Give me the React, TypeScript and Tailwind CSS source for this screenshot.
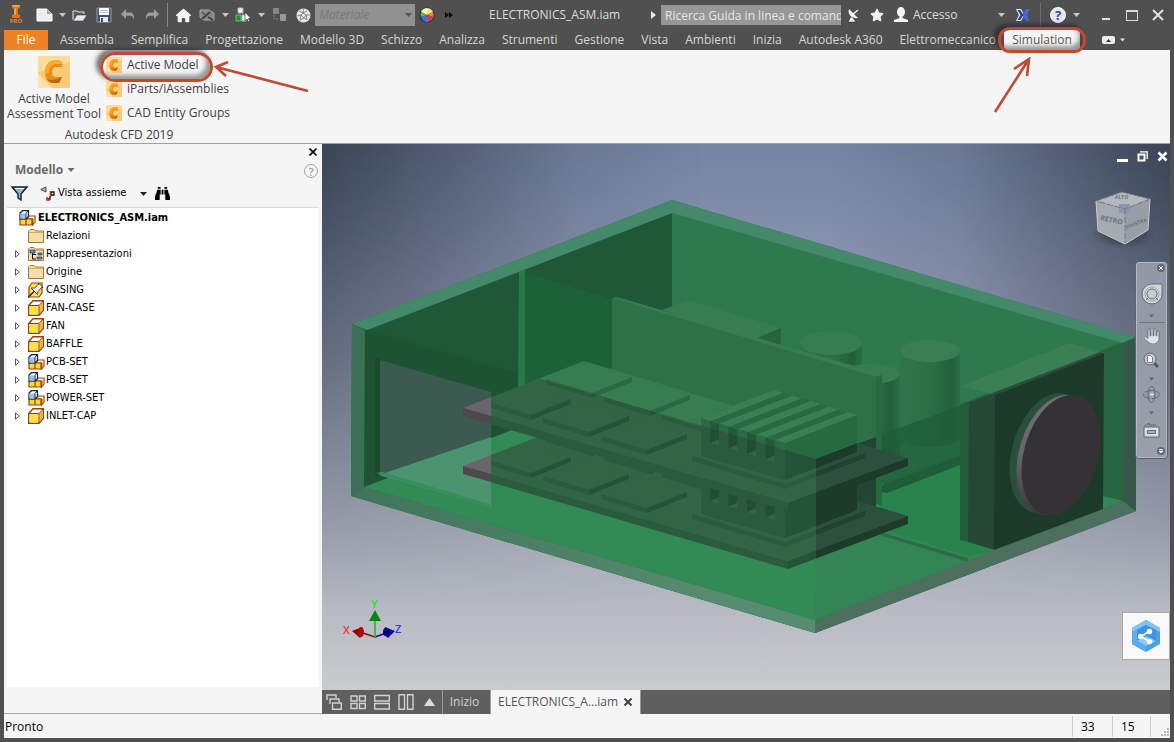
import type { ReactNode } from "react";
import { FaBinoculars } from "react-icons/fa";
import { FaStar, FaHouse, FaHand } from "react-icons/fa6";

const UI = "font-['Open_Sans','Noto_Sans',sans-serif]";

/* ---------- small shared pieces ---------- */

function Caret({ className = "text-[#c8c8c8]" }: { className?: string }) {
  return (
    <svg width="7" height="4" viewBox="0 0 7 4" className={className} aria-hidden="true">
      <path d="M0 0H7L3.5 4Z" fill="currentColor" />
    </svg>
  );
}

function Tool({ label, className = "w-6", children }: { label: string; className?: string; children: ReactNode }) {
  return (
    <button type="button" aria-label={label} className={`flex h-6 shrink-0 items-center justify-center ${className}`}>
      {children}
    </button>
  );
}

function ProLogo() {
  return (
    <div className="flex w-6 shrink-0 flex-col items-center">
      <svg width="10" height="13" viewBox="0 0 10 13" aria-hidden="true">
        <path d="M1 0H9V3L7 4V9L9 10V13H1V10L3 9V4L1 3Z" fill="#d8761c" />
        <path d="M1 0H9L7 2H3ZM3 4 5 3V10L3 9Z" fill="#f7a548" />
      </svg>
      <span className="text-[6px] leading-[7px] font-bold text-[#e08a30]">PRO</span>
    </div>
  );
}

function NewIcon() {
  return (
    <svg width="17" height="14" viewBox="0 0 17 14" aria-hidden="true">
      <path d="M1 1H11L16 6V13H1Z" fill="#eceeef" stroke="#fff" />
      <path d="M11 1V6H16Z" fill="#9aa4ae" />
    </svg>
  );
}

function OpenIcon() {
  return (
    <svg width="16" height="13" viewBox="0 0 16 13" aria-hidden="true">
      <path d="M1 11V2H5L6 3H12V5" fill="#4c5966" stroke="#dfe4e8" />
      <path d="M1 12 5 6H15L11 12Z" fill="#e6eaee" stroke="#39434e" strokeWidth=".6" />
    </svg>
  );
}

function SaveIcon() {
  return (
    <svg width="16" height="16" viewBox="0 0 16 16" aria-hidden="true">
      <path d="M1 1H15V15H1Z" fill="#3e5068" stroke="#8ea0b4" />
      <path d="M3 1H13V8H3Z" fill="#fff" />
      <path d="M4 3.500H12M4 5.500H12" stroke="#b7c0ca" />
      <path d="M4 10H12V15H4Z" fill="#e7ebef" />
      <path d="M5 11H7V15H5Z" fill="#3e5068" />
    </svg>
  );
}

function ArrowIcon({ flip = false }: { flip?: boolean }) {
  return (
    <svg width="14" height="12" viewBox="0 0 14 12" className={flip ? "-scale-x-100" : ""} aria-hidden="true">
      <path d="M0 5 5 0V3.500H9C12 3.500 13.500 6 13 11C12.200 8 11 6.800 9 6.800H5V10Z" fill="#9a9ea2" />
    </svg>
  );
}

function SketchIcon() {
  return (
    <svg width="16" height="14" viewBox="0 0 16 14" aria-hidden="true">
      <path d="M1 2H10L15 5V12H4L1 9Z" fill="#85898c" stroke="#a0a4a7" />
      <path d="M3 11 11 4M9 9 14 12" stroke="#3d4144" strokeWidth="2" />
      <path d="M3 4 6 7" stroke="#5a5e61" strokeWidth="1.500" />
    </svg>
  );
}

function PickIcon() {
  return (
    <svg width="16" height="16" viewBox="0 0 16 16" aria-hidden="true">
      <path d="M3 1H8V6H3Z" fill="#f4f5f6" stroke="#aeb4b8" />
      <path d="M1 8H6V14H1Z" fill="#2b8a35" stroke="#63c56b" />
      <path d="M7 8H11V14H7Z" fill="#e8ebed" stroke="#b3b9bd" />
      <path d="M10 5V14L12 12L13.500 15L14.700 14.300L13.500 11.500H16Z" fill="#fff" stroke="#222" strokeWidth=".6" />
    </svg>
  );
}

function LinkIcon() {
  return (
    <svg width="15" height="14" viewBox="0 0 15 14" aria-hidden="true">
      <rect x="1" y="0" width="6" height="6" rx="1" fill="#85898c" />
      <path d="M2 7V11H6" stroke="#85898c" strokeDasharray="2 1" fill="none" />
      <rect x="8" y="6" width="6" height="7" rx="1" fill="#96999c" />
    </svg>
  );
}

function GlobeIcon() {
  return (
    <svg width="15" height="15" viewBox="0 0 15 15" aria-hidden="true">
      <circle cx="7.500" cy="7.500" r="7" fill="#e6e8ea" />
      <path d="M3 3 7 5 11 3M1 8 5 7 7 5 10 7 14 7M5 7 4 12M10 7 11 12M4 12 8 10 11 12M8 10 5 7M8 10 10 7M7 5 7.500 1" stroke="#6c7278" strokeWidth=".8" fill="none" />
    </svg>
  );
}

function ColorBall() {
  return (
    <svg width="16" height="16" viewBox="0 0 16 16" aria-hidden="true">
      <circle cx="8" cy="8" r="7.500" fill="#1c2440" />
      <path d="M8 8V1A7 7 0 0 1 14 5Z" fill="#f6e27a" />
      <path d="M8 8V1A7 7 0 0 0 2 5Z" fill="#f9f2c8" />
      <path d="M8 8 2 5A7 7 0 0 0 2 10Z" fill="#5fc04a" />
      <path d="M8 8 14 5A7 7 0 0 1 14.500 10Z" fill="#f08a32" />
      <path d="M8 8 2 10A7 7 0 0 0 6 14.700Z" fill="#3a76d8" />
      <path d="M8 8 6 14.700A7 7 0 0 0 11 14.300Z" fill="#8a5bd0" />
      <path d="M8 8 11 14.300A7 7 0 0 0 14.500 10Z" fill="#e23a38" />
    </svg>
  );
}

function DishIcon() {
  return (
    <svg width="13" height="15" viewBox="0 0 13 15" aria-hidden="true">
      <path d="M2 1C0 6 5 11 11 10Z" fill="#f4f4f4" />
      <path d="M6 6 11 2" stroke="#f4f4f4" strokeWidth="1.500" />
      <path d="M4 9 1 14H9L6 10" fill="#f4f4f4" stroke="#222" strokeWidth=".5" />
    </svg>
  );
}

function PersonIcon() {
  return (
    <svg width="16" height="16" viewBox="0 0 16 16" aria-hidden="true">
      <ellipse cx="8" cy="5" rx="4" ry="5" fill="#f4f4f4" />
      <path d="M6.500 9H9.500V11L15 13V15H1V13L6.500 11Z" fill="#f4f4f4" />
    </svg>
  );
}

function ExchangeIcon() {
  return (
    <svg width="14" height="12" viewBox="0 0 14 12" aria-hidden="true">
      <path d="M0 0H5L8.500 6L5 12H0L3 6Z" fill="#e9eefc" />
      <path d="M14 0H10L6 6L10 12H14L11 6Z" fill="#4469d0" />
      <path d="M1.500 1H4.300L7.500 6 4.300 11H1.500L4.500 6Z" fill="#23408f" />
    </svg>
  );
}

/* ---------- top bars ---------- */

function TitleBar() {
  return (
    <header className="flex h-[30px] items-center px-1 text-[#dcdcdc]">
      <ProLogo />
      <Tool label="Nuovo" className="ml-1 w-6"><NewIcon /></Tool>
      <Tool label="Opzioni nuovo" className="w-3"><Caret /></Tool>
      <Tool label="Apri"><OpenIcon /></Tool>
      <Tool label="Salva"><SaveIcon /></Tool>
      <Tool label="Annulla"><ArrowIcon /></Tool>
      <Tool label="Ripeti"><ArrowIcon flip /></Tool>
      <span className="mx-[3px] h-6 w-px shrink-0 bg-[#8a8a8a]" />
      <Tool label="Home"><FaHouse size={15} color="#f2f2f2" /></Tool>
      <Tool label="Schizzo"><SketchIcon /></Tool>
      <Tool label="Opzioni schizzo" className="w-3"><Caret /></Tool>
      <Tool label="Seleziona"><PickIcon /></Tool>
      <Tool label="Opzioni selezione" className="w-3"><Caret /></Tool>
      <Tool label="Collega"><LinkIcon /></Tool>
      <Tool label="Aspetto"><GlobeIcon /></Tool>
      <div className="relative flex shrink-0 items-center">
        <select aria-label="Materiale" className="h-[22px] w-[100px] appearance-none bg-[#919191] pl-1 text-[12px] text-[#787878] italic">
          <option>Materiale</option>
        </select>
        <span className="pointer-events-none absolute right-[3px]"><Caret className="text-[#555]" /></span>
      </div>
      <Tool label="Colore"><ColorBall /></Tool>
      <Tool label="Altro" className="w-5">
        <svg width="8" height="6" viewBox="0 0 8 6" aria-hidden="true"><path d="M0 0 4 3 0 6ZM4 0 8 3 4 6Z" fill="#0c0c0c" /></svg>
      </Tool>
      <h1 className="ml-[30px] flex-1 text-[12px] whitespace-nowrap">ELECTRONICS_ASM.iam</h1>
      <Tool label="Espandi ricerca" className="w-4">
        <svg width="5" height="8" viewBox="0 0 5 8" aria-hidden="true"><path d="M0 0 5 4 0 8Z" fill="#e8e8e8" /></svg>
      </Tool>
      <input
        aria-label="Ricerca"
        defaultValue="Ricerca Guida in linea e comand"
        className="h-5 w-[180px] shrink-0 bg-[#979797] pl-1 text-[12px] text-[#e6e6e6]"
      />
      <Tool label="Comunicazioni"><DishIcon /></Tool>
      <Tool label="Preferiti"><FaStar size={14} color="#f0f0f0" /></Tool>
      <button type="button" className="flex h-6 w-[106px] shrink-0 items-center gap-1 pl-1 text-[12px]">
        <PersonIcon />
        Accesso
      </button>
      <Tool label="Opzioni accesso" className="w-3"><Caret /></Tool>
      <Tool label="Exchange" className="ml-1 w-6"><ExchangeIcon /></Tool>
      <span className="mx-[5px] h-6 w-px shrink-0 bg-[#707070]" />
      <Tool label="Guida">
        <span className="flex size-4 items-center justify-center rounded-full border border-white bg-[#e4e8f4] text-[13px] leading-none font-bold text-[#1d4aa8]">?</span>
      </Tool>
      <Tool label="Opzioni guida" className="w-3"><Caret /></Tool>
      <Tool label="Riduci a icona" className="ml-3 w-6"><span className="mt-2 h-[2px] w-2 bg-[#e0e0e0]" /></Tool>
      <Tool label="Ingrandisci" className="w-7"><span className="h-[11px] w-3 border border-t-2 border-[#d8d8d8]" /></Tool>
      <Tool label="Chiudi">
        <svg width="12" height="12" viewBox="0 0 12 12" aria-hidden="true"><path d="M1 1 11 11M11 1 1 11" stroke="#e0e0e0" strokeWidth="2" /></svg>
      </Tool>
    </header>
  );
}

const TABS = [
  "Assembla", "Semplifica", "Progettazione", "Modello 3D", "Schizzo", "Analizza", "Strumenti", "Gestione",
  "Vista", "Ambienti", "Inizia", "Autodesk A360", "Elettromeccanico",
];

function Ring({ className }: { className: string }) {
  return (
    <span
      className={`pointer-events-none absolute z-10 border-[3px] border-[#bf4a32] shadow-[-4px_-3px_4px_rgba(30,30,30,0.6),inset_-4px_-4px_4px_rgba(60,60,60,0.5)] ${className}`}
    />
  );
}

function TabBar() {
  return (
    <nav className="flex h-5 px-1 text-[12px] leading-5 text-[#d6d6d6]">
      <button type="button" className="w-11 shrink-0 bg-[#f08226] text-white">File</button>
      <div className="ml-1 flex shrink-0 gap-px">
        {TABS.map((t) => (
          <button type="button" key={t} className="px-2 whitespace-nowrap">{t}</button>
        ))}
      </div>
      <div className="relative">
        <button type="button" className="h-5 w-[76px] bg-[#f5f5f5] text-[#555]">Simulation</button>
        <Ring className="-inset-x-[6px] -top-[3px] -bottom-[3px] rounded-xl" />
        <svg width="38" height="58" viewBox="0 0 38 58" className="pointer-events-none absolute -left-[11px] top-[27px] z-10" aria-hidden="true">
          <path d="M2 55 36 2M21 12 36 2 34 19" fill="none" stroke="#c04a32" strokeWidth="2.600" />
        </svg>
      </div>
      <button type="button" aria-label="Riduci barra multifunzione" className="ml-[22px] flex items-center gap-[5px]">
        <span className="flex h-2 w-[13px] items-center justify-center rounded-[2px] bg-[#ececec]">
          <svg width="5" height="3" viewBox="0 0 5 3" aria-hidden="true"><path d="M0 3H5L2.500 0Z" fill="#333" /></svg>
        </span>
        <Caret className="w-[5px] text-[#e0e0e0]" />
      </button>
    </nav>
  );
}

function CfdIcon({ size }: { size: number }) {
  return (
    <svg width={size} height={size} viewBox="0 0 32 32" className="shrink-0" aria-hidden="true">
      <rect width="32" height="32" fill="#fbdc9c" />
      <path d="M0 16 32 6V32H0Z" fill="#fccb78" />
      <path d="M0 18 14 32H0Z" fill="#fde3b4" />
      <path d="M24 5V11H19C15 11 14 13 14 16C14 20 16 21 19 21H24L21 27H16C10 27 7 23 7 17C7 9 11 4 18 4Z" fill="#e98d13" />
      <path d="M24 5V8H18C13 8 11 12 11 17L7 18C7 9 11 4 18 4Z" fill="#f6ab32" />
      <path d="M24 21 21 27H16C12 27 10 25 9 23C13 25 18 24 24 21Z" fill="#b9660c" />
    </svg>
  );
}

function Ribbon() {
  return (
    <section className="mx-1 flex h-[94px] border-b border-[#a0a0a0] bg-[#f5f5f5] text-[12px] text-[#3f3f3f]">
      <div className="flex flex-col">
        <div className="flex h-[76px]">
          <button type="button" className="flex w-[100px] flex-col items-center pt-[6px] leading-[15px]">
            <CfdIcon size={32} />
            <span className="mt-[3px] whitespace-nowrap">Active Model<br />Assessment Tool</span>
          </button>
          <div className="flex flex-col items-start pt-[3px] pl-[2px]">
            <div className="relative">
              <button type="button" className="flex h-6 items-center gap-[5px]">
                <CfdIcon size={16} />Active Model
              </button>
              <Ring className="-top-[1px] -left-[6px] h-[30px] w-[113px] rounded-2xl" />
              <svg width="96" height="32" viewBox="0 0 96 32" className="pointer-events-none absolute top-[7px] left-[107px] z-10" aria-hidden="true">
                <path d="M95 31 3 7M15 2 3 7 13 16" fill="none" stroke="#c04a32" strokeWidth="2.600" />
              </svg>
            </div>
            <button type="button" className="flex h-6 items-center gap-[5px]"><CfdIcon size={16} />iParts/iAssemblies</button>
            <button type="button" className="flex h-6 items-center gap-[5px]"><CfdIcon size={16} />CAD Entity Groups</button>
          </div>
        </div>
        <div className="pl-1 text-center leading-[17px]">Autodesk CFD 2019</div>
      </div>
    </section>
  );
}

/* ---------- model browser ---------- */

function PartIcon() {
  return (
    <svg width="16" height="16" viewBox="0 0 16 16" className="shrink-0" aria-hidden="true">
      <path d="M.7 5.500 5 .7H15.300V10.500L11 15.300H.7Z" fill="#fff" stroke="#94400c" strokeWidth="1.400" />
      <path d="M1.400 6H10.500V14.600H1.400Z" fill="#fde24a" />
      <path d="M11.500 5.500 14.600 2V10L11.500 13.800Z" fill="#f2b824" />
      <path d="M1 5.500H11L15 1M11 5.500V15" stroke="#94400c" fill="none" />
    </svg>
  );
}

function AssemblyIcon() {
  return (
    <svg width="17" height="16" viewBox="0 0 17 16" className="shrink-0" aria-hidden="true">
      <path d="M7.500 9 10 6H16V12L13.500 15V9Z" fill="#fff" stroke="#94400c" strokeWidth="1.200" />
      <path d="M13.800 9.500 15.500 7.500V12L13.800 14Z" fill="#eaa71e" />
      <path d="M1 9H7V15H1ZM7 9H13V15H7Z" fill="#fcd83c" stroke="#94400c" strokeWidth="1.200" />
      <path d="M1 3 3.500 .7H9.500V6.500L7 9H1Z" fill="#f4f8fd" stroke="#172437" strokeWidth="1.200" />
      <path d="M1.500 3.500H6.500V8.500H1.500Z" fill="#9fc0e6" />
      <path d="M7 3.500V9M7 3.500 9 1" stroke="#172437" />
    </svg>
  );
}

function FolderIcon({ views = false }: { views?: boolean }) {
  return (
    <svg width="16" height="16" viewBox="0 0 16 16" className="shrink-0" aria-hidden="true">
      <path d="M.5 14.500V3L2 1.500H6L7.500 3H15.500V14.500Z" fill="#f4dcab" stroke="#a8762c" />
      <path d="M1 4.500H15" stroke="#d6ab64" />
      {views && (
        <g>
          <path d="M4.500 5V13H8M4.500 8.500H8" stroke="#111" fill="none" />
          <path d="M2 4H7V7H2ZM10 7H14V9H10ZM9 11H14V13H9Z" fill="#4b8fd0" stroke="#1d3a5c" strokeWidth=".7" />
        </g>
      )}
    </svg>
  );
}

function PinnedIcon() {
  return (
    <svg width="16" height="16" viewBox="0 0 16 16" className="shrink-0" aria-hidden="true">
      <path d="M1 5 4 1H14V11L11 15H1Z" fill="#fde24a" stroke="#94400c" strokeWidth="1.200" />
      <path d="M0 15.500 6 9.500" stroke="#222" strokeWidth="1.300" />
      <path d="M3 6 9.500 12.500 10 9.500 13.500 5.500 15 5.500 10.500 1V2.500L6.500 6Z" fill="#f4f4f4" stroke="#222" strokeWidth=".8" />
    </svg>
  );
}

type Node = { name: string; icon: ReactNode; leaf?: boolean };
const NODES: Node[] = [
  { name: "Relazioni", icon: <FolderIcon />, leaf: true },
  { name: "Rappresentazioni", icon: <FolderIcon views /> },
  { name: "Origine", icon: <FolderIcon /> },
  { name: "CASING", icon: <PinnedIcon /> },
  { name: "FAN-CASE", icon: <PartIcon /> },
  { name: "FAN", icon: <PartIcon /> },
  { name: "BAFFLE", icon: <PartIcon /> },
  { name: "PCB-SET", icon: <AssemblyIcon /> },
  { name: "PCB-SET", icon: <AssemblyIcon /> },
  { name: "POWER-SET", icon: <AssemblyIcon /> },
  { name: "INLET-CAP", icon: <PartIcon /> },
];

function Browser() {
  return (
    <aside className="flex w-[318px] shrink-0 flex-col border-b border-[#a8a8a8] bg-[#f5f5f5] px-[3px]">
      <div className="flex justify-end pt-1 pr-[2px]">
        <button type="button" aria-label="Chiudi browser">
          <svg width="8" height="8" viewBox="0 0 8 8" aria-hidden="true"><path d="M.5 .5 7.500 7.500M7.500 .5 .5 7.500" stroke="#000" strokeWidth="1.600" /></svg>
        </button>
      </div>
      <div className="flex h-[22px] items-end justify-between pr-px pl-2">
        <button type="button" className="flex items-center gap-1 text-[12px] leading-4 font-bold text-[#6a6a6a]">
          Modello <Caret className="w-2 text-[#6a6a6a]" />
        </button>
        <button type="button" aria-label="Guida" className="flex size-[14px] items-center justify-center rounded-full border border-[#a0a0a0] text-[11px] leading-none text-[#8a8a8a]">?</button>
      </div>
      <div className="flex h-[30px] items-center border-b border-[#d8d8d8] pt-[2px] pl-1 font-['DejaVu_Sans_Condensed','Noto_Sans',sans-serif] text-[11px] text-black">
        <button type="button" aria-label="Filtro">
          <svg width="17" height="15" viewBox="0 0 17 15" aria-hidden="true">
            <path d="M1 1H16L10 8V14L7 12V8Z" fill="#8fb4d4" stroke="#14202c" strokeWidth="1.400" />
            <path d="M4 2.500H13" stroke="#fff" />
          </svg>
        </button>
        <button type="button" className="ml-3 flex items-center gap-[2px]">
          <svg width="16" height="15" viewBox="0 0 16 15" aria-hidden="true">
            <path d="M.8 3.500 6 1V6Z" fill="#bbb" stroke="#222" strokeWidth=".8" />
            <path d="M7 13H10V10M11 10V6H14V9H11" stroke="#111" fill="none" strokeWidth="1.300" />
            <path d="M7 11V14H10M10.500 5V11" stroke="#d4242a" strokeWidth="1.500" fill="none" />
          </svg>
          Vista assieme
          <Caret className="ml-3 text-[#222]" />
        </button>
        <button type="button" aria-label="Trova" className="ml-2"><FaBinoculars size={15} /></button>
      </div>
      <ul className="mb-[26px] flex-1 bg-white pt-px font-['DejaVu_Sans_Condensed','Noto_Sans',sans-serif] text-[11px] leading-[18px] text-black">
        <li className="flex h-[18px] items-center gap-[2px] pl-3 font-bold"><AssemblyIcon />ELECTRONICS_ASM.iam</li>
        {NODES.map((n, i) => (
          <li key={i} className="flex h-[18px] items-center">
            <button type="button" aria-label={`Espandi ${n.name}`} className={`ml-2 flex w-[13px] ${n.leaf ? "invisible" : ""}`}>
              <svg width="5" height="8" viewBox="0 0 5 8" aria-hidden="true"><path d="M.5 .8 4.300 4 .5 7.200Z" fill="#fff" stroke="#444" strokeWidth=".9" /></svg>
            </button>
            <span className="flex w-[18px]">{n.icon}</span>
            {n.name}
          </li>
        ))}
      </ul>
    </aside>
  );
}

/* ---------- 3D scene ---------- */

type Palette = { top: string; left: string; right: string; fin: string; slot: string };
const LIT: Palette = { top: "#387c51", left: "#2c6b45", right: "#276a42", fin: "#3a7f54", slot: "#235b3a" };
const SHADE: Palette = { top: "#336446", left: "#2b5b3e", right: "#245438", fin: "#326446", slot: "#234c35" };
const DARK: Palette = { top: "#2d4f3d", left: "#1f4330", right: "#1c3b2a", fin: "#2d4f3d", slot: "#1c3b2a" };

const CHIPS = [
  [592, 393], [650, 411], [531, 415], [589, 432], [647, 450],
];

function Board({ p }: { p: Palette }) {
  return (
    <g>
      <path d="M463 408 584 361 908 458 788 503Z" fill={p.top} />
      <path d="M463 408 788 503V511L463 416Z" fill={p.left} />
      <path d="M788 503 908 458V466L788 511Z" fill={p.right} />
      {CHIPS.map(([x, y]) => (
        <g key={`${x}-${y}`} transform={`translate(${x} ${y})`}>
          <path d="M-46 -14 -7 -30 40 -16 0 0Z" fill={p.top} />
          <path d="M-46 -14 0 0V5L-46 -9Z" fill={p.left} />
          <path d="M0 0 40 -16V-11L0 5Z" fill={p.right} />
        </g>
      ))}
      <path d="M661 415 710 430V434L661 419Z" fill={p.left} />
      <path d="M692 456 785 484 865 453V458L785 489 692 461Z" fill={p.left} />
      <path d="M701 418 785 442V480L701 456Z" fill={p.left} />
      <path d="M785 442 857 415V452L785 480Z" fill={p.right} />
      <path d="M701 418 774 390 857 415 785 442Z" fill={p.right} />
      {[0, 1, 2, 3, 4].map((k) => (
        <path key={k} d="M701 418 774 390 783 393 711 421Z" fill={p.fin} transform={`translate(${k * 18.500} ${k * 5.500})`} />
      ))}
      {[0, 1, 2, 3].map((k) => (
        <g key={k} transform={`translate(${k * 18.500} ${k * 5.500})`}>
          <path d="M710 421 719 424V446L710 443Z" fill={p.slot} />
          <path d="M710 443 719 439V446Z" fill={p.top} />
        </g>
      ))}
    </g>
  );
}

function Scene() {
  return (
    <svg viewBox="322 144 848 546" preserveAspectRatio="xMidYMid slice" className="absolute inset-0 size-full" aria-hidden="true">
      <defs>
        <linearGradient id="sky" x1="0" y1="0" x2="0" y2="1">
          <stop offset="0" stopColor="#7484a3" />
          <stop offset=".25" stopColor="#8c96b1" />
          <stop offset=".7" stopColor="#a6abb9" />
          <stop offset=".85" stopColor="#b7bac3" />
          <stop offset="1" stopColor="#cacbce" />
        </linearGradient>
        <linearGradient id="sides" x1="0" x2="1">
          <stop offset="0" stopColor="#2c3442" stopOpacity=".8" />
          <stop offset=".12" stopColor="#2c3442" stopOpacity=".55" />
          <stop offset=".3" stopColor="#2c3442" stopOpacity=".15" />
          <stop offset=".45" stopColor="#2c3442" stopOpacity="0" />
          <stop offset=".6" stopColor="#2c3442" stopOpacity="0" />
          <stop offset=".75" stopColor="#2c3442" stopOpacity=".15" />
          <stop offset=".9" stopColor="#2c3442" stopOpacity=".55" />
          <stop offset="1" stopColor="#2c3442" stopOpacity=".8" />
        </linearGradient>
        <linearGradient id="fade" x1="0" y1="0" x2="0" y2="1">
          <stop offset="0" stopColor="#fff" />
          <stop offset=".4" stopColor="#8c8c8c" />
          <stop offset=".65" stopColor="#383838" />
          <stop offset=".85" stopColor="#000" />
        </linearGradient>
        <mask id="topMask"><rect x="322" y="144" width="848" height="546" fill="url(#fade)" /></mask>
        <linearGradient id="cyl" x1="0" x2="1">
          <stop offset="0" stopColor="#31744b" />
          <stop offset=".6" stopColor="#2a6c45" />
          <stop offset=".85" stopColor="#225e3a" />
          <stop offset="1" stopColor="#2b6f47" />
        </linearGradient>
        <linearGradient id="rim" x1="0" y1="0" x2="0" y2="1">
          <stop offset="0" stopColor="#707074" />
          <stop offset=".5" stopColor="#666669" />
          <stop offset="1" stopColor="#3a383c" />
        </linearGradient>
        <linearGradient id="base" x1="0" x2="1">
          <stop offset="0" stopColor="#3f7459" />
          <stop offset=".8" stopColor="#588c70" />
        </linearGradient>
        <clipPath id="above"><path d="M322 144H1170V324L816 459 352 324H322Z" /></clipPath>
        <clipPath id="frontLeft"><path d="M352 324 816 459V690H322Z" /></clipPath>
        <clipPath id="frontRight"><path d="M816 459 1170 324V690H816Z" /></clipPath>
      </defs>
      <rect x="322" y="144" width="848" height="546" fill="url(#sky)" />
      <rect x="322" y="144" width="848" height="546" fill="url(#sides)" mask="url(#topMask)" />

      {/* enclosure walls */}
      <path d="M352 324 672 200 1136 337V511L815 633 351 496Z" fill="#2f794e" />
      <path d="M365 331 672 213V500L364 487Z" fill="#1e5836" />
      <path d="M352 324 816 459 1136 337V511L815 633 351 496Z" fill="#1d5534" opacity=".5" />
      <path d="M365 331 525 375V470L364 487Z" fill="#1d5233" />
      <path d="M352 324 672 200 1136 337 1122 343 672 213 367 330Z" fill="#43896a" />
      <path d="M525 273 612 299V430H525Z" fill="#1c6138" />
      <path d="M519 272 525 270V400H518Z" fill="#287a4b" />

      {/* floor */}
      <path d="M364 487 512 430 700 485 960 430 1123 501 815 620Z" fill="#328a55" />
      <path d="M880 480 960 455 994 500V550L968 558 880 532Z" fill="#28834c" />
      <path d="M816 540 882 528 968 556 1000 549 815 620Z" fill="#338553" />
      <path d="M880 532 968 558V562L880 535Z" fill="#2c6b47" />

      {/* power set */}
      <path d="M662 310 688 300 781 328 755 339Z" fill="#387c51" />
      <path d="M755 339 781 328V347Z" fill="#27633f" />
      <path d="M800 345V370H862V345Z" fill="url(#cyl)" />
      <ellipse cx="831" cy="343" rx="31" ry="12" fill="#387c51" />
      <path d="M840 374V470H900V374Z" fill="url(#cyl)" />
      <ellipse cx="870" cy="374" rx="30" ry="10" fill="#387c51" />
      <path d="M900 352V438A30 9 0 0 0 960 438V352Z" fill="url(#cyl)" />
      <ellipse cx="930" cy="351" rx="30" ry="11" fill="#3a7e53" />
      <path d="M882 434 960 406V456L887 485 882 483Z" fill="#1f5c39" opacity=".75" />
      <path d="M882 485 960 456V465L887 493 882 492Z" fill="#1f5c38" />
      <path d="M612 298 882 376V502L612 430Z" fill="#2e7149" />
      <path d="M612 298 617 297 882 374 877 377Z" fill="#387c51" />
      <path d="M876 377 882 375V506L876 504Z" fill="#256b42" />
      <path d="M816 459 876 437V506L816 520Z" fill="#234533" />

      {/* circuit boards */}
      <g clipPath="url(#frontLeft)"><g transform="translate(0 58)"><Board p={SHADE} /></g></g>
      <g clipPath="url(#frontRight)"><g transform="translate(0 58)"><Board p={DARK} /></g></g>
      <g clipPath="url(#above)"><Board p={LIT} /></g>
      <g clipPath="url(#frontLeft)"><Board p={SHADE} /></g>
      <g clipPath="url(#frontRight)"><Board p={DARK} /></g>

      {/* inlet window */}
      <path d="M380 360 491 392V508L379 475Z" fill="#3b5b50" />
      <path d="M379 475 491 437V508Z" fill="#4c9470" />
      <path d="M463 408 491 397V417L463 408Z" fill="#68666b" />
      <path d="M463 408 491 416V424L463 416Z" fill="#4b494e" />
      <path d="M463 466 491 455V475Z" fill="#68666b" />
      <path d="M463 466 491 474V482L463 474Z" fill="#4b494e" />
      <path d="M375 357 380 359V474L375 475Z" fill="#194a2d" />
      <path d="M376 473 382 472 490 504V508Z" fill="#34905c" />

      {/* enclosure edges */}
      <path d="M352 324 365 331 364 487 351 496Z" fill="#3b7056" />
      <path d="M351 496 364 487 815 620V633Z" fill="url(#base)" />
      <path d="M815 633V620L1123 501 1136 511Z" fill="#4c6f5e" />
      <path d="M1104 352 1124 345V501L1103 509Z" fill="#276541" />
      <path d="M1103 496 1123 501 1103 509Z" fill="#35875a" />
      <path d="M1123 344 1136 337V511L1123 501Z" fill="#36584a" />

      {/* fan */}
      <path d="M961 386 1070 343 1104 353 995 395Z" fill="#3b7f54" />
      <path d="M961 405 995 392 1100 352 1104 353 995 397Z" fill="#2c4f3c" />
      <path d="M960 406 969 403V542L960 540Z" fill="#205d38" />
      <path d="M969 403 995 394V550L968 542Z" fill="#274735" />
      <path d="M995 395 1104 353 1103 509 994 550Z" fill="#1c3a2a" />
      <circle r="1" transform="matrix(38 0 -10.500 60 1049 453)" fill="#2a4f3c" />
      <circle r="1" transform="matrix(38 0 -10.500 60 1056 455)" fill="url(#rim)" />
      <circle r="1" transform="matrix(38 0 -10.500 60 1061 455)" fill="#343236" />
    </svg>
  );
}

function Triad() {
  return (
    <svg width="64" height="46" viewBox="0 0 64 46" className="absolute bottom-[48px] left-5" aria-hidden="true">
      <path d="M33 41 18 36" stroke="#8c0d0d" strokeWidth="1.500" />
      <path d="M33 41 44 37" stroke="#10108c" strokeWidth="1.500" />
      <path d="M33 41V18" stroke="#0bbf1d" strokeWidth="1.500" />
      <path d="M33 14 39 25H27Z" fill="#0a870a" />
      <path d="M10 35 20 31 21 38 18 42Z" fill="#8b0808" />
      <ellipse cx="19" cy="36" rx="3" ry="5" fill="#b00b0b" />
      <path d="M53 35 43 31 41 38 46 42Z" fill="#0808a0" />
      <ellipse cx="44" cy="36" rx="3" ry="4" fill="#05056c" />
      <text x="29" y="12" fontSize="11" fontWeight="600" fontFamily="Open Sans" fill="#1ce81c">Y</text>
      <text x="1" y="38" fontSize="11" fontWeight="600" fontFamily="Open Sans" fill="#f03434">X</text>
      <text x="53" y="37" fontSize="11" fontWeight="600" fontFamily="Open Sans" fill="#3434e8">Z</text>
    </svg>
  );
}

function ViewCube() {
  return (
    <svg width="66" height="66" viewBox="0 0 66 66" className="absolute top-[42px] right-[14px]" aria-hidden="true">
      <defs>
        <radialGradient id="cubeShadow"><stop offset="0" stopColor="#222" stopOpacity=".7" /><stop offset="1" stopColor="#222" stopOpacity="0" /></radialGradient>
      </defs>
      <ellipse cx="33" cy="48" rx="32" ry="15" fill="url(#cubeShadow)" />
      <path d="M6 15 32 6 60 13 35 23Z" fill="#b5b8be" />
      <path d="M6 15 35 23V58L8 45Z" fill="#a6aab1" />
      <path d="M35 23 60 13 58 44 35 58Z" fill="#999da6" />
      <path d="M29 18H40V27H29Z" fill="#8b97aa" />
      <path d="M6 15 32 6 60 13 35 23ZM35 23V58" fill="none" stroke="#74787f" strokeDasharray="6 2" />
      <path d="M6 15 8 45 35 58 58 44 60 13" fill="none" stroke="#c7c9cd" />
      <g fontWeight="700" fontFamily="Open Sans" fill="#6e7279">
        <text x="10" y="34" fontSize="7" transform="rotate(12 10 34)">RETRO</text>
        <text x="36" y="43" fontSize="5" transform="rotate(-20 36 43)">SINISTRA</text>
        <text x="25" y="13" fontSize="5">ALTO</text>
      </g>
    </svg>
  );
}

function NavBar() {
  return (
    <div className="absolute top-[117px] right-[2px] flex h-[198px] w-[33px] flex-col items-center rounded-[4px] border border-[#5c6474] bg-[#9ea2ae]/85 text-[#5f6571] shadow-[inset_0_0_0_1px_#b4b8c0]">
      <button type="button" aria-label="Chiudi barra" className="mt-[2px] mr-[2px] flex size-[8px] items-center justify-center self-end rounded-full bg-[#626874]">
        <svg width="4" height="4" viewBox="0 0 4 4" aria-hidden="true"><path d="M0 0 4 4M4 0 0 4" stroke="#fff" /></svg>
      </button>
      <button type="button" aria-label="Ruota di navigazione" className="mt-[11px]">
        <svg width="22" height="22" viewBox="0 0 22 22" aria-hidden="true">
          <path d="M21 1H11A10 10 0 1 0 21 11Z" fill="#d3d5d9" stroke="#666c77" />
          <circle cx="11" cy="11" r="7" fill="none" stroke="#8a909a" strokeWidth=".7" />
          <circle cx="11" cy="11" r="5" fill="#c9ccd1" stroke="#666c77" />
          <path d="M5 17 8 14M17 17 14 14" stroke="#666c77" />
        </svg>
      </button>
      <Caret className="mt-[9px] w-[5px]" />
      <span className="mt-1 h-px w-[26px] bg-[#6f7582]" />
      <button type="button" aria-label="Pan" className="mt-[5px]"><FaHand size={16} color="#e2e3e6" stroke="#5f6571" strokeWidth={25} /></button>
      <button type="button" aria-label="Zoom" className="mt-2">
        <svg width="17" height="17" viewBox="0 0 17 17" aria-hidden="true">
          <path d="M11 11 15 15" stroke="#555b66" strokeWidth="3" />
          <circle cx="7" cy="7" r="6" fill="#c4c7cd" stroke="#5f6571" />
          <path d="M4.500 3.500H7.500L9.500 5.500V10.500H4.500Z" fill="#f4f4f6" stroke="#5f6571" strokeWidth=".8" />
        </svg>
      </button>
      <Caret className="mt-2 w-[5px]" />
      <button type="button" aria-label="Orbita" className="mt-[5px]">
        <svg width="17" height="17" viewBox="0 0 17 17" aria-hidden="true">
          <ellipse cx="8.500" cy="8.500" rx="8" ry="4" fill="none" stroke="#626874" strokeDasharray="9 2" />
          <ellipse cx="8.500" cy="8.500" rx="3.500" ry="8" fill="none" stroke="#626874" />
          <path d="M7 8.500H11M9 6.500V10.500" stroke="#e2e3e6" />
        </svg>
      </button>
      <Caret className="mt-2 w-[5px]" />
      <button type="button" aria-label="Guarda" className="mt-[7px]">
        <svg width="17" height="16" viewBox="0 0 17 16" aria-hidden="true">
          <path d="M1 5H16V15H1Z" fill="#dcdde0" stroke="#5f6571" />
          <path d="M4.500 8.500H12.500V11.500H4.500Z" fill="#aeb2ba" stroke="#5f6571" />
          <path d="M2 4 6 1V3H13" fill="none" stroke="#5f6571" />
        </svg>
      </button>
      <button type="button" aria-label="Opzioni barra" className="mt-[9px] mr-[2px] flex size-[8px] items-center justify-center self-end rounded-full bg-[#626874]">
        <svg width="4" height="4" viewBox="0 0 4 4" aria-hidden="true"><path d="M0 .5H4M0 2H4L2 4Z" stroke="#fff" strokeWidth=".7" fill="#fff" /></svg>
      </button>
    </div>
  );
}

function ShareButton() {
  return (
    <button type="button" aria-label="Condividi" className="absolute right-0 bottom-[30px] flex size-12 items-center justify-center border border-[#a8a8a8] bg-[#f9f9f9]">
      <svg width="30" height="32" viewBox="0 0 30 32" aria-hidden="true">
        <path d="M15 0 29 8V24L15 32 1 24V8Z" fill="#4a9fe8" />
        <path d="M15 0 29 8V12L15 5 1 12V8Z" fill="#83c2f6" />
        <path d="M1 12 6 10V21L15 26V32L1 24Z" fill="#5aadf2" />
        <path d="M6 10 15 5 25 10V21L15 26 6 21Z" fill="#3f92e0" />
        <path d="M6 21 15 16 25 21 15 26Z" fill="#8bc7f8" />
        <path d="M18 11.500 10 16.500 18 21.500" stroke="#fff" strokeWidth="1.500" fill="none" />
        <circle cx="18.500" cy="11.500" r="2.700" fill="#fff" />
        <circle cx="9.500" cy="16.500" r="2.700" fill="#fff" />
        <circle cx="18.500" cy="21.500" r="2.700" fill="#fff" />
      </svg>
    </button>
  );
}

function WindowControls() {
  return (
    <div className="absolute top-[7px] right-[2px] flex items-center gap-[9px]">
      <button type="button" aria-label="Riduci documento" className="flex h-[11px] items-end"><span className="h-[3px] w-[11px] bg-white" /></button>
      <button type="button" aria-label="Ripristina documento">
        <svg width="11" height="11" viewBox="0 0 11 11" aria-hidden="true">
          <path d="M1.500 3.500H7.500V9.500H1.500Z" fill="none" stroke="#fff" strokeWidth="2" />
          <path d="M3 .8H10.200V8" fill="none" stroke="#fff" strokeWidth="1.300" />
        </svg>
      </button>
      <button type="button" aria-label="Chiudi documento">
        <svg width="11" height="11" viewBox="0 0 11 11" aria-hidden="true"><path d="M1.500 1.500 9.500 9.500M9.500 1.500 1.500 9.500" stroke="#fff" strokeWidth="2.600" /></svg>
      </button>
    </div>
  );
}

function DocTabs() {
  const line = { fill: "none", stroke: "#d2d2d2", strokeWidth: 1.4 };
  return (
    <div className="flex h-6 items-stretch bg-[#5f5f5f] text-[12px] text-[#d0d0d0]">
      <div className="flex items-center gap-2 pr-[7px] pl-1">
        <button type="button" aria-label="Sovrapponi">
          <svg width="16" height="16" viewBox="0 0 16 16" aria-hidden="true"><path d="M1 6V1H10V4M4 10V5H13V8M6.500 9H15.300V15.300H6.500Z" {...line} /></svg>
        </button>
        <button type="button" aria-label="Affianca">
          <svg width="16" height="16" viewBox="0 0 16 16" aria-hidden="true"><path d="M1 2H7V7H1ZM9.500 2H15.300V7H9.500ZM1 9.500H7V14.500H1ZM9.500 9.500H15.300V14.500H9.500Z" {...line} /></svg>
        </button>
        <button type="button" aria-label="Affianca in orizzontale">
          <svg width="16" height="16" viewBox="0 0 16 16" aria-hidden="true"><path d="M.7 1.500H15.300V7H.7ZM.7 9.500H15.300V15H.7Z" {...line} /></svg>
        </button>
        <button type="button" aria-label="Affianca in verticale">
          <svg width="16" height="16" viewBox="0 0 16 16" aria-hidden="true"><path d="M1 .7H6.500V15.300H1ZM9.500 .7H15V15.300H9.500Z" {...line} /></svg>
        </button>
        <button type="button" aria-label="Altre schede" className="ml-[2px]">
          <svg width="11" height="8" viewBox="0 0 11 8" aria-hidden="true"><path d="M0 8H11L5.500 0Z" fill="#dcdcdc" /></svg>
        </button>
      </div>
      <button type="button" className="w-12 border-l border-[#9a9a9a] pr-1">Inizio</button>
      <button type="button" className="flex w-[151px] items-center justify-between border-x border-[#9a9a9a] bg-[#f5f5f5] pr-2 pl-[7px] text-[#555]">
        ELECTRONICS_A...iam
        <svg width="8" height="8" viewBox="0 0 8 8" aria-hidden="true"><path d="M.5 .5 7.500 7.500M7.500 .5 .5 7.500" stroke="#444" strokeWidth="2" /></svg>
      </button>
    </div>
  );
}

export default function App() {
  return (
    <div className={`flex min-h-screen flex-col bg-[#505050] ${UI}`}>
      <TitleBar />
      <TabBar />
      <Ribbon />
      <main className="mx-1 flex flex-1">
        <Browser />
        <div className="flex min-w-0 flex-1 flex-col">
          <div className="relative flex-1 overflow-hidden bg-[#8f98b2]">
            <Scene />
            <WindowControls />
            <ViewCube />
            <NavBar />
            <Triad />
            <ShareButton />
          </div>
          <DocTabs />
        </div>
      </main>
      <footer className="mx-1 mb-1 flex h-6 items-center bg-[#f5f5f5] pt-px text-[12px] text-black">
        <span className="flex-1 pl-px">Pronto</span>
        <span className="flex h-[21px] w-10 items-center border-l border-[#cfcfcf] pl-2">33</span>
        <span className="flex h-[21px] w-[38px] items-center border-l border-[#cfcfcf] pl-2">15</span>
        <span className="flex h-[21px] w-5 items-end justify-end border-l border-[#cfcfcf]">
          <svg width="9" height="9" viewBox="0 0 9 9" aria-hidden="true"><path d="M6 0H8V2H6ZM6 3H8V5H6ZM6 6H8V8H6ZM3 3H5V5H3ZM3 6H5V8H3ZM0 6H2V8H0Z" fill="#b5b5b5" /></svg>
        </span>
      </footer>
    </div>
  );
}
